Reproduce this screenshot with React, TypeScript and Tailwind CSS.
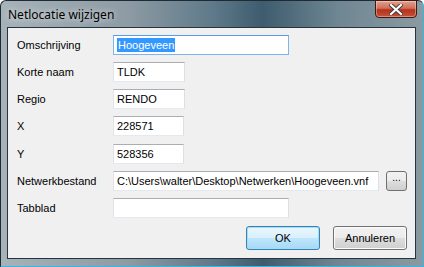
import React from 'react';

const font = { fontFamily: '"Liberation Sans", Arial, sans-serif' };

const Field = ({ label, value, width, focused = false }: { label: string; value: string; width: string; focused?: boolean }) => (
  <div className="flex h-[20px] items-center">
    <span className="w-[105px] shrink-0 pl-[9px] text-[11px] text-black">{label}</span>
    <div
      className={`flex h-[20px] items-center border bg-white px-[3px] ${width} ${
        focused
          ? 'border-[#7eb4ea] border-t-[#569de5]'
          : 'border-[#e3e9ef] border-t-[#abadb3] border-l-[#e2e3ea] border-r-[#dbdfe6]'
      }`}
    >
      {focused ? (
        <span className="bg-[#3399ff] px-[1px] text-[11px] leading-[14px] text-white">{value}</span>
      ) : (
        <span className="whitespace-nowrap text-[11px] text-black">{value}</span>
      )}
    </div>
  </div>
);

export default function App() {
  return (
    <div className="h-[267px] w-[424px] overflow-hidden" style={font}>
      <div className="relative flex h-full w-full flex-col rounded-t-[6px] border border-[#1f2b33] border-b-[#36b6e0] border-r-[#36b6e0] bg-[linear-gradient(90deg,#a7b2b9_0%,#8d9ba4_30%,#5f7a8a_50%,#3e5c6e_62%,#6f8793_80%,#8a9aa2_100%)] pb-[7px] pl-[6px] pr-[7px]">
        {/* title bar */}
        <div className="flex h-[26px] shrink-0 items-center">
          <span className="pl-[1px] pt-[1px] text-[12px] text-black [text-shadow:0_0_6px_rgba(255,255,255,0.9)]" style={{ fontFamily: '"Noto Sans", "Open Sans", sans-serif' }}>
            Netlocatie wijzigen
          </span>
        </div>
        <div className="absolute right-[6px] top-[-1px] flex h-[18px] w-[42px] items-center justify-center rounded-b-[4px] border border-[#3b1a14] bg-[linear-gradient(180deg,#e4a08e_0%,#d0705a_45%,#b5321b_55%,#c9503a_100%)] shadow-[inset_0_0_0_1px_rgba(255,255,255,0.35)]">
          <svg width="14" height="11" viewBox="0 0 14 11">
            <path d="M2 1 L12 10 M12 1 L2 10" stroke="#3a3a3a" strokeWidth="4" strokeLinecap="square" />
            <path d="M2 1 L12 10 M12 1 L2 10" stroke="#ffffff" strokeWidth="2.2" strokeLinecap="square" />
          </svg>
        </div>
        {/* client area */}
        <div className="flex flex-1 flex-col gap-[7px] border border-[#27343c] bg-[#f0f0f0] pt-[7px]">
          <Field label="Omschrijving" value="Hoogeveen" width="w-[176px]" focused />
          <Field label="Korte naam" value="TLDK" width="w-[72px]" />
          <Field label="Regio" value="RENDO" width="w-[72px]" />
          <Field label="X" value="228571" width="w-[71px]" />
          <div className="mt-[1px]">
            <Field label="Y" value="528356" width="w-[71px]" />
          </div>
          <div className="flex items-center">
            <Field label="Netwerkbestand" value="C:\Users\walter\Desktop\Netwerken\Hoogeveen.vnf" width="w-[266px]" />
            <button className="ml-[7px] flex h-[20px] w-[21px] items-start justify-center rounded-[3px] border border-[#707070] bg-[linear-gradient(180deg,#f2f2f2_0%,#ebebeb_50%,#dddddd_51%,#cfcfcf_100%)] text-[10px] leading-[12px] text-black">
              ...
            </button>
          </div>
          <Field label="Tabblad" value="" width="w-[176px]" />
          <div className="mt-[1px] flex justify-end gap-[13px] pr-[8px]">
            <button className="flex h-[24px] w-[74px] items-center justify-center rounded-[3px] border border-[#3c7fb1] bg-[linear-gradient(180deg,#eaf6fd_0%,#d9f0fc_50%,#bee6fd_51%,#a7d9f5_100%)] text-[11px] text-black shadow-[inset_0_0_0_1px_#9ce0fa]">
              OK
            </button>
            <button className="flex h-[24px] w-[74px] items-center justify-center rounded-[3px] border border-[#707070] bg-[linear-gradient(180deg,#f2f2f2_0%,#ebebeb_50%,#dddddd_51%,#cfcfcf_100%)] text-[11px] text-black shadow-[inset_0_0_0_1px_#fcfcfc]">
              Annuleren
            </button>
          </div>
        </div>
      </div>
    </div>
  );
}
